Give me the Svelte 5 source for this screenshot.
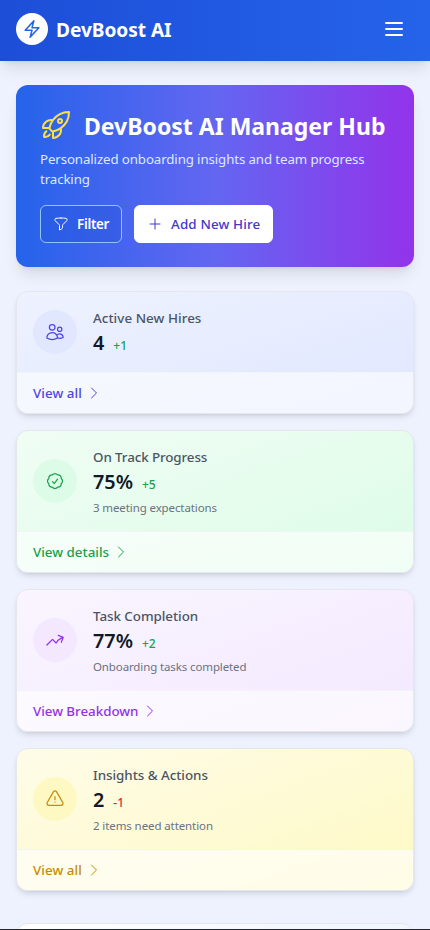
<script>
  const chevron = 'm8.25 4.5 7.5 7.5-7.5 7.5';
  const cards = [
    {
      tone: 'indigo', label: 'Active New Hires', value: '4', change: '+1', link: 'View all',
      labelTrack: 0.05, linkTrack: 0.05,
      icon: 'M15 19.128a9.38 9.38 0 0 0 2.625.372 9.337 9.337 0 0 0 4.121-.952 4.125 4.125 0 0 0-7.533-2.493M15 19.128v-.003c0-1.113-.285-2.16-.786-3.07M15 19.128v.106A12.318 12.318 0 0 1 8.624 21c-2.331 0-4.512-.645-6.374-1.766l-.001-.109a6.375 6.375 0 0 1 11.964-3.07M12 6.375a3.375 3.375 0 1 1-6.75 0 3.375 3.375 0 0 1 6.75 0Zm8.25 2.25a2.625 2.625 0 1 1-5.25 0 2.625 2.625 0 0 1 5.25 0Z'
    },
    {
      tone: 'green', label: 'On Track Progress', value: '75%', change: '+5', note: '3 meeting expectations', link: 'View details',
      labelTrack: -0.1, noteTrack: -0.11, linkTrack: 0,
      icon: 'M9 12.75 11.25 15 15 9.75M21 12c0 1.268-.63 2.39-1.593 3.068a3.745 3.745 0 0 1-1.043 3.296 3.745 3.745 0 0 1-3.296 1.043A3.745 3.745 0 0 1 12 21c-1.268 0-2.39-.63-3.068-1.593a3.746 3.746 0 0 1-3.296-1.043 3.745 3.745 0 0 1-1.043-3.296A3.745 3.745 0 0 1 3 12c0-1.268.63-2.39 1.593-3.068a3.745 3.745 0 0 1 1.043-3.296 3.746 3.746 0 0 1 3.296-1.043A3.746 3.746 0 0 1 12 3c1.268 0 2.39.63 3.068 1.593a3.746 3.746 0 0 1 3.296 1.043 3.746 3.746 0 0 1 1.043 3.296A3.745 3.745 0 0 1 21 12Z'
    },
    {
      tone: 'purple', label: 'Task Completion', value: '77%', change: '+2', note: 'Onboarding tasks completed', link: 'View Breakdown',
      labelTrack: -0.05, noteTrack: -0.12, linkTrack: -0.04,
      icon: 'M2.25 18 9 11.25l4.306 4.306a11.95 11.95 0 0 1 5.814-5.518l2.74-1.22m0 0-5.94-2.281m5.94 2.28-2.28 5.941'
    },
    {
      tone: 'yellow', label: 'Insights & Actions', value: '2', change: '-1', down: true, note: '2 items need attention', link: 'View all',
      labelTrack: -0.04, noteTrack: -0.1, linkTrack: 0.05,
      icon: 'M12 9v3.75m-9.303 3.376c-.866 1.5.217 3.374 1.948 3.374h14.71c1.73 0 2.813-1.874 1.948-3.374L13.949 3.378c-.866-1.5-3.032-1.5-3.898 0L2.697 16.126ZM12 15.75h.007v.008H12v-.008Z'
    }
  ];
</script>

{#snippet icon(d, size, width = 1.5)}
  <svg width={size} height={size} viewBox="0 0 24 24" fill="none" stroke="currentColor" stroke-width={width} stroke-linecap="round" stroke-linejoin="round" aria-hidden="true"><path {d} /></svg>
{/snippet}

<div class="screen">
  <header>
    <div class="brand">
      <span class="logo">{@render icon('m3.75 13.5 10.5-11.25L12 10.5h8.25L9.75 21.75 12 13.5H3.75Z', 20, 1.8)}</span>
      <span class="name">DevBoost AI</span>
    </div>
    <button class="menu" aria-label="Menu">{@render icon('M4 6h16M4 12h16M4 18h16', 24, 2)}</button>
  </header>

  <main>
    <section class="hero">
      <div class="heading">
        <span class="rocket">{@render icon('M15.59 14.37a6 6 0 0 1-5.84 7.38v-4.8m5.84-2.58a14.98 14.98 0 0 0 6.16-12.12A14.98 14.98 0 0 0 9.631 8.41m5.96 5.96a14.926 14.926 0 0 1-5.841 2.58m-.119-8.54a6 6 0 0 0-7.381 5.84h4.8m2.581-5.84a14.927 14.927 0 0 0-2.58 5.84m2.699 2.7c-.103.021-.207.041-.311.06a15.09 15.09 0 0 1-2.448-2.448 14.9 14.9 0 0 1 .06-.312m-2.24 2.39a4.493 4.493 0 0 0-1.757 4.306 4.493 4.493 0 0 0 4.306-1.758M16.5 9a1.5 1.5 0 1 1-3 0 1.5 1.5 0 0 1 3 0Z', 32)}</span>
        <h1>DevBoost AI Manager Hub</h1>
      </div>
      <p>Personalized onboarding insights and team progress tracking</p>
      <div class="actions">
        <button class="filter">{@render icon('M12 3c2.755 0 5.455.232 8.083.678.533.09.917.556.917 1.096v1.044a2.25 2.25 0 0 1-.659 1.591l-5.432 5.432a2.25 2.25 0 0 0-.659 1.591v2.927a2.25 2.25 0 0 1-1.244 2.013L9.75 21v-6.568a2.25 2.25 0 0 0-.659-1.591L3.659 7.409A2.25 2.25 0 0 1 3 5.818V4.774c0-.54.384-1.006.917-1.096A48.32 48.32 0 0 1 12 3Z', 16)}<span>Filter</span></button>
        <button class="add">{@render icon('M12 4.5v15m7.5-7.5h-15', 16)}<span>Add New Hire</span></button>
      </div>
    </section>

    <section class="cards">
      {#each cards as card}
        <article class="card {card.tone}">
          <div class="body">
            <span class="badge">{@render icon(card.icon, 20)}</span>
            <div class="info">
              <div class="label" style:letter-spacing="{card.labelTrack}px">{card.label}</div>
              <div class="figures"><span class="value">{card.value}</span><span class="change" class:down={card.down}>{card.change}</span></div>
              {#if card.note}<div class="note" style:letter-spacing="{card.noteTrack}px">{card.note}</div>{/if}
            </div>
          </div>
          <div class="foot"><span style:letter-spacing="{card.linkTrack}px">{card.link}</span>{@render icon(chevron, 16)}</div>
        </article>
      {/each}
    </section>

    <section class="next"></section>
  </main>
  <div class="edge"></div>
</div>

<style>
  :global(body) { background: #eef2ff; }
  .screen {
    box-sizing: border-box;
    height: 930px;
    overflow: hidden;
    position: relative;
    display: flex;
    flex-direction: column;
    background: #eef2ff;
    font-family: "Noto Sans", "Open Sans", sans-serif;
    font-size: 13.4px;
    line-height: 20px;
  }
  svg { display: block; flex: none; }
  header {
    box-sizing: border-box;
    height: 61px;
    flex: none;
    padding: 0 24px 3px 16px;
    display: flex;
    align-items: center;
    justify-content: space-between;
    background: linear-gradient(to right, #1d4ed8, #2563eb);
    color: #fff;
    box-shadow: 0 10px 15px -3px rgb(0 0 0 / 0.1), 0 4px 6px -4px rgb(0 0 0 / 0.1);
  }
  .brand { display: flex; align-items: center; gap: 8px; }
  .logo {
    width: 32px;
    height: 32px;
    border-radius: 50%;
    background: #fff;
    color: #2563eb;
    display: grid;
    place-items: center;
  }
  .name { font-size: 19.1px; font-weight: 700; line-height: 28px; padding-top: 2px; letter-spacing: -0.04px; }
  button { border: 0; background: none; color: inherit; font: inherit; padding: 0; }
  main { padding: 24px 16px 0; }
  .hero {
    padding: 24px;
    border-radius: 12px;
    color: #fff;
    background: linear-gradient(to right, #2563eb, #6366f1, #9333ea);
    box-shadow: 0 10px 15px -3px rgb(0 0 0 / 0.1), 0 4px 6px -4px rgb(0 0 0 / 0.1);
  }
  .heading { display: flex; align-items: center; gap: 12px; height: 32px; }
  .rocket { color: #fde047; }
  h1 { margin: 0; padding-top: 2px; font-size: 23px; line-height: 32px; font-weight: 700; white-space: nowrap; }
  p { margin: 8px 0 16px; color: #dbeafe; font-size: 13.3px; letter-spacing: -0.12px; }
  .actions { display: flex; gap: 12px; }
  .actions button {
    box-sizing: border-box;
    height: 38px;
    display: flex;
    align-items: center;
    gap: 8px;
    padding: 0 12px;
    border: 1px solid #93c5fd;
    border-radius: 6px;
    font-weight: 600;
  }
  .actions .filter { width: 82px; background: rgb(29 78 216 / 0.3); letter-spacing: -0.3px; }
  .actions .add { width: 139px; background: #fff; border-color: #fff; color: #4338ca; font-weight: 500; letter-spacing: 0.13px; white-space: nowrap; }
  .cards { margin-top: 24px; display: flex; flex-direction: column; gap: 16px; }
  .card {
    border: 1px solid #e5e7eb;
    border-radius: 12px;
    overflow: hidden;
    box-shadow: 0 4px 6px -1px rgb(0 0 0 / 0.1), 0 2px 4px -2px rgb(0 0 0 / 0.1);
  }
  .body { padding: 16px; display: flex; align-items: center; gap: 16px; }
  .badge { width: 44px; height: 44px; border-radius: 50%; display: grid; place-items: center; flex: none; }
  .label { font-weight: 500; color: #4b5563; }
  .figures { box-sizing: border-box; display: flex; align-items: baseline; gap: 9px; height: 28px; padding-top: 1px; }
  .value { font-size: 19.8px; line-height: 28px; font-weight: 600; color: #111827; }
  .change { font-size: 12px; line-height: 16px; font-weight: 500; color: #16a34a; }
  .change.down { color: #e11d48; }
  .note { box-sizing: border-box; height: 20px; padding-top: 5px; font-size: 11.5px; line-height: 16px; color: #6b7280; }
  .foot {
    border-top: 1px solid #f3f4f6;
    padding: 10px 16px;
    background: rgb(255 255 255 / 0.6);
    display: flex;
    align-items: center;
    gap: 4px;
    font-weight: 500;
  }
  .indigo { background: linear-gradient(to bottom right, #eef2ff, #e0e7ff); }
  .indigo .badge { background: #e0e7ff; }
  .indigo .badge, .indigo .foot { color: #4f46e5; }
  .green { background: linear-gradient(to bottom right, #f0fdf4, #dcfce7); }
  .green .badge { background: #dcfce7; }
  .green .badge, .green .foot { color: #16a34a; }
  .purple { background: linear-gradient(to bottom right, #faf5ff, #f3e8ff); }
  .purple .badge { background: #f3e8ff; }
  .purple .badge, .purple .foot { color: #9333ea; }
  .yellow { background: linear-gradient(to bottom right, #fefce8, #fef9c3); }
  .yellow .badge { background: #fef9c3; }
  .yellow .badge, .yellow .foot { color: #ca8a04; }
  .next { margin-top: 32px; height: 60px; border: 1px solid #e5e7eb; border-radius: 12px; background: linear-gradient(to right, #fff, #eff6ff); }
  .edge { position: absolute; left: 0; right: 0; bottom: 0; height: 1px; background: #24262e; }
</style>
